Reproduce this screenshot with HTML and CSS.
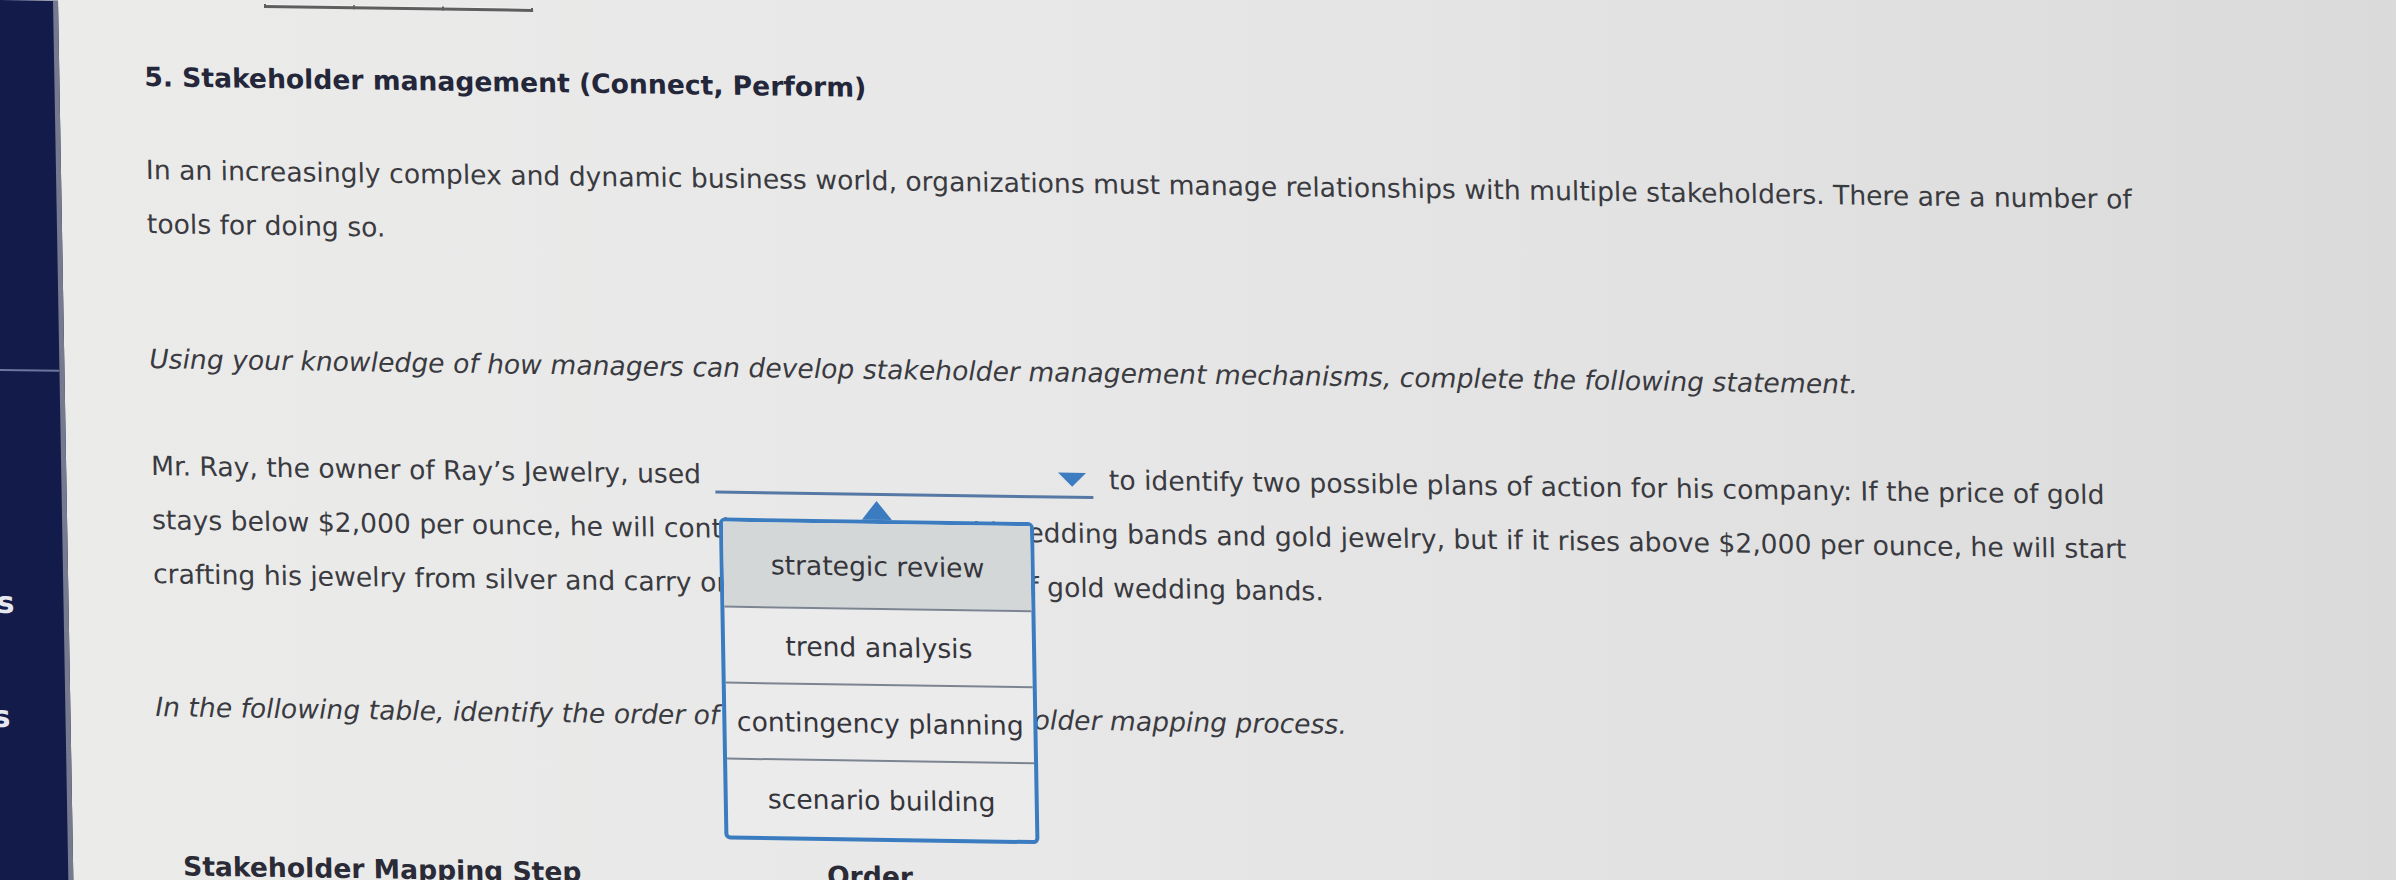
FILE: index.html
```html
<!DOCTYPE html>
<html lang="en">
<head>
<meta charset="utf-8">
<title>Stakeholder management</title>
<link rel="stylesheet" href="styles.css">
</head>
<body>
<div class="screen">
  <aside class="sidebar">
    <div class="side-top"></div>
    <div class="side-label side-label-1">s</div>
    <div class="side-label side-label-2">s</div>
  </aside>
  <main class="main">
    <div class="top-cells"><span class="cell"></span><span class="cell"></span><span class="cell"></span></div>
    <h2 class="title">5. Stakeholder management (Connect, Perform)</h2>
    <p class="text p-intro">In an increasingly complex and dynamic business world, organizations must manage relationships with multiple stakeholders. There are a number of<br>tools for doing so.</p>
    <p class="text italic p-using">Using your knowledge of how managers can develop stakeholder management mechanisms, complete the following statement.</p>
    <p class="text p-ray">Mr. Ray, the owner of Ray’s Jewelry, used <span class="dropdown"><span class="dd-arrow"></span><span class="popup"><span class="opt opt-active">strategic review</span><span class="opt">trend analysis</span><span class="opt">contingency planning</span><span class="opt opt-last">scenario building</span></span></span> to identify two possible plans of action for his company: If the price of gold<br>stays below $2,000 per ounce, he will continue to produce gold wedding bands and gold jewelry, but if it rises above $2,000 per ounce, he will start<br>crafting his jewelry from silver and carry only a select collection of gold wedding bands.</p>
    <p class="text italic p-table">In the following table, identify the order of the steps in the stakeholder mapping process.</p>
    <table class="steps">
      <thead>
        <tr><th class="col-step">Stakeholder Mapping Step</th><th class="col-order">Order</th></tr>
      </thead>
    </table>
  </main>
</div>
</body>
</html>
```

FILE: styles.css
```css
html, body {
  margin: 0;
  padding: 0;
}

body {
  width: 2396px;
  height: 880px;
  overflow: hidden;
  background: linear-gradient(90deg, #ebebea 0%, #e7e8e7 40%, #e0e1e0 75%, #d9dad9 100%);
  font-family: "DejaVu Sans", Verdana, sans-serif;
}

.screen {
  display: flex;
  width: 2480px;
  height: 960px;
  margin-left: -20px;
  transform: skew(1deg, 0.85deg);
  transform-origin: 20px 0;
}

.sidebar {
  flex: none;
  width: 73px;
  background: #131b4b;
  border-right: 5px solid #767a8e;
  display: flex;
  flex-direction: column;
  color: #e6e8f0;
  font-weight: bold;
  font-size: 30px;
  line-height: 30px;
  overflow: hidden;
}

.side-top {
  height: 369px;
  border-bottom: 2px solid #6d779e;
}

.side-label-1 {
  margin-top: 217px;
  margin-left: 6px;
}

.side-label-2 {
  margin-top: 84px;
  margin-left: 0;
}

.main {
  flex: 1;
  padding-left: 85px;
  color: #3a3a41;
  font-size: 26.6px;
  line-height: 54px;
}

.top-cells {
  display: flex;
  margin-left: 121px;
  height: 4px;
}

.cell {
  width: 87px;
  border-left: 2px solid #5e5e5e;
  border-bottom: 3px solid #5e5e5e;
  background: #f1f1f1;
}

.cell:last-child {
  border-right: 2px solid #5e5e5e;
}

.title {
  margin: 44px 0 0;
  font-size: 26.6px;
  line-height: 54px;
  font-weight: bold;
  color: #24263a;
  white-space: nowrap;
}

.text {
  margin: 0;
  white-space: nowrap;
}

.italic {
  font-style: italic;
}

.p-intro { margin-top: 39px; }
.p-using { margin-top: 81px; }
.p-ray { margin-top: 53px; }
.p-table { margin-top: 79px; }

.dropdown {
  display: inline-block;
  position: relative;
  width: 378px;
  height: 23px;
  margin: 0 7px 0 6px;
  border-bottom: 3px solid #5678a4;
  vertical-align: -10px;
}

.dd-arrow {
  display: block;
  width: 0;
  height: 0;
  margin: 0 7px 0 auto;
  border-left: 14px solid transparent;
  border-right: 14px solid transparent;
  border-top: 14px solid #3d7cc0;
}

.popup {
  position: absolute;
  left: 3px;
  top: 50px;
  width: 307px;
  border: 4px solid #3b7cc0;
  border-radius: 6px;
  background: #ebebeb;
  display: flex;
  flex-direction: column;
  z-index: 2;
  font-style: normal;
}

.popup::before {
  content: "";
  position: absolute;
  left: 50%;
  top: -23px;
  margin-left: -15px;
  border-left: 15px solid transparent;
  border-right: 15px solid transparent;
  border-bottom: 19px solid #3b7cc0;
}

.opt {
  height: 74px;
  display: flex;
  align-items: center;
  justify-content: center;
  font-size: 26.6px;
  line-height: normal;
  color: #35353b;
  border-top: 2px solid #7c8492;
  white-space: nowrap;
}

.opt-active {
  height: 84px;
  border-top: none;
  background: #d4d7d8;
}

.opt-last {
  height: 76px;
}

.steps {
  margin-top: 105px;
  border-collapse: collapse;
}

.steps th {
  padding: 0;
  text-align: left;
  font-weight: bold;
  font-size: 26.6px;
  line-height: 54px;
  color: #2a2b36;
  white-space: nowrap;
}

.col-step {
  padding-left: 25px !important;
  width: 644px;
}
```
